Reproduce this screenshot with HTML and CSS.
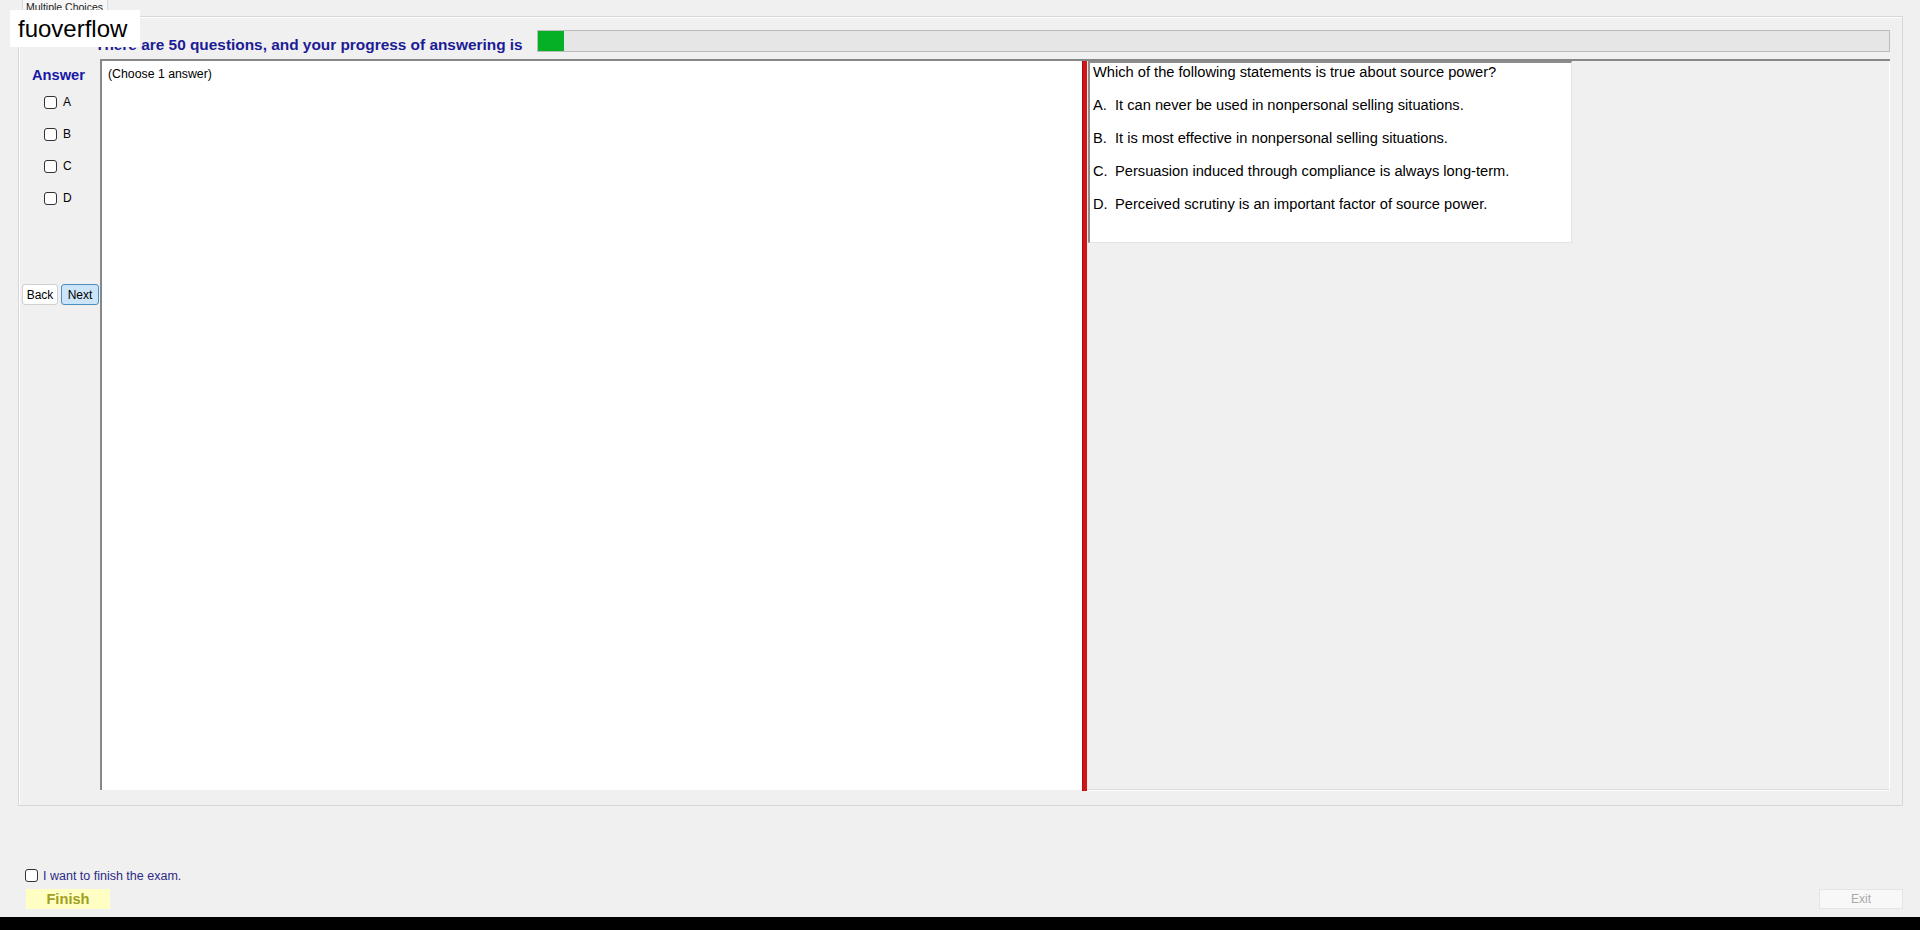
FILE: index.html
```html
<!DOCTYPE html>
<html lang="en">
<head>
  <meta charset="UTF-8" />
  <meta name="viewport" content="width=device-width, initial-scale=1.0"/>
  <title>Multiple Choices</title>
  <link rel="stylesheet" href="styles.css">
</head>
<body>
  <div class="window">
    <div class="watermark">fuoverflow</div>

    <div class="tabs">
      <div class="tab">Multiple Choices</div>
    </div>

    <div class="panel">
      <div class="progress-row">
        <h1 class="progress-title">There are 50 questions, and your progress of answering is</h1>
        <div class="progress"><div class="progress-fill" style="width: 1.9%"></div></div>
      </div>

      <div class="work">
        <div class="sidebar">
          <div class="answer-title">Answer</div>
          <div class="options">
            <label class="option"><input type="checkbox"> A</label>
            <label class="option"><input type="checkbox"> B</label>
            <label class="option"><input type="checkbox"> C</label>
            <label class="option"><input type="checkbox"> D</label>
          </div>
          <div class="nav">
            <button class="btn">Back</button>
            <button class="btn btn-next">Next</button>
          </div>
        </div>

        <div class="main">
          <div class="answer-pane">(Choose 1 answer)</div>
          <div class="splitter"></div>
          <div class="question-pane">
            <div class="question-box">
              <p>Which of the following statements is true about source power?</p>
              <p><span class="letter">A.</span>It can never be used in nonpersonal selling situations.</p>
              <p><span class="letter">B.</span>It is most effective in nonpersonal selling situations.</p>
              <p><span class="letter">C.</span>Persuasion induced through compliance is always long-term.</p>
              <p><span class="letter">D.</span>Perceived scrutiny is an important factor of source power.</p>
            </div>
          </div>
        </div>
      </div>
    </div>

    <div class="footer">
      <div class="finish-group">
        <label class="finish-check"><input type="checkbox"> I want to finish the exam.</label>
        <button class="btn-finish">Finish</button>
      </div>
      <button class="btn-exit">Exit</button>
    </div>
  </div>
  <div class="taskbar"></div>
</body>
</html>
```

FILE: styles.css
```css
body {
  margin: 0;
  height: 930px;
  overflow: hidden;
  background-color: #f0f0f0;
  font-family: "Liberation Sans", Arial, sans-serif;
  color: #000;
}
.window {
  position: relative;
  height: 917px;
}
.watermark {
  position: absolute;
  top: 10px;
  left: 10px;
  width: 130px;
  height: 37px;
  box-sizing: border-box;
  padding-left: 8px;
  background: #fff;
  font-size: 24px;
  line-height: 37px;
  z-index: 2;
}
.tabs {
  height: 16px;
}
.tab {
  margin-left: 22px;
  width: 86px;
  height: 16px;
  box-sizing: border-box;
  padding: 1px 0 0 3px;
  border: 1px solid #d9d9d9;
  border-top: none;
  border-bottom: none;
  background: #f7f7f7;
  font-size: 10.5px;
  line-height: 12px;
  color: #222;
}
.panel {
  margin-left: 18px;
  width: 1885px;
  height: 790px;
  box-sizing: border-box;
  border: 1px solid #d7d7d7;
  box-shadow: inset 1px 1px 0 #fff;
}
.progress-row {
  display: flex;
  height: 42px;
  padding-left: 76px;
}
.progress-title {
  margin: 19px 0 0;
  width: 442px;
  font-size: 15.4px;
  line-height: 18px;
  font-weight: bold;
  color: #1c1c96;
  white-space: nowrap;
}
.progress {
  margin-top: 13px;
  width: 1353px;
  height: 22px;
  box-sizing: border-box;
  border: 1px solid #bcbcbc;
  background: #e6e6e6;
}
.progress-fill {
  height: 100%;
  background: #06b025;
}
.work {
  display: grid;
  grid-template-columns: 81px 1790px;
  height: 731px;
}
.sidebar {
  padding: 8px 0 0 3px;
}
.answer-title {
  padding-left: 10px;
  font-size: 14.67px;
  line-height: 17px;
  font-weight: bold;
  color: #1717a8;
}
.options {
  margin-top: 2px;
  padding-left: 22px;
}
.option {
  display: flex;
  align-items: center;
  gap: 6px;
  height: 32px;
  font-size: 12px;
}
.option input,
.finish-check input {
  appearance: none;
  width: 13px;
  height: 13px;
  margin: 0;
  box-sizing: border-box;
  border: 1px solid #333;
  border-radius: 3px;
  background: #fff;
}
.nav {
  display: flex;
  gap: 3px;
  margin-top: 70px;
}
.btn {
  width: 36px;
  height: 21px;
  padding: 0;
  border: 1px solid #d0d0d0;
  border-radius: 3px;
  background: #fff;
  font-family: inherit;
  font-size: 12px;
  color: #000;
}
.btn-next {
  width: 38px;
  border-color: #4f8fbf;
  background: #cce4f7;
}
.main {
  display: flex;
  border-top: 2px solid #878787;
  border-left: 2px solid #878787;
}
.answer-pane {
  width: 980px;
  padding: 6px 0 0 6px;
  box-sizing: border-box;
  background: #fff;
  font-size: 12.3px;
  line-height: 14px;
}
.splitter {
  width: 5px;
  margin-bottom: -1px;
  box-sizing: border-box;
  border-left: 1px solid #9c1010;
  background: #d41515;
}
.question-pane {
  flex: 1;
  border-right: 1px solid #fff;
  border-bottom: 1px solid #dcdcdc;
  box-shadow: 0 1px 0 #fff;
}
.question-box {
  margin-left: 1px;
  width: 484px;
  height: 182px;
  box-sizing: border-box;
  padding: 1px 0 0 3px;
  border-top: 2px solid #8c8c8c;
  border-left: 2px solid #8c8c8c;
  border-right: 1px solid #e3e3e3;
  border-bottom: 1px solid #e3e3e3;
  background: #fff;
  font-size: 14.67px;
  line-height: 17px;
}
.question-box p {
  margin: 0 0 16px;
}
.letter {
  display: inline-block;
  width: 22px;
}
.footer {
  display: flex;
  justify-content: space-between;
  align-items: flex-end;
  height: 111px;
  box-sizing: border-box;
  padding: 0 17px 8px 25px;
}
.finish-group {
  display: flex;
  flex-direction: column;
  align-items: flex-start;
  gap: 7px;
}
.finish-check {
  display: flex;
  align-items: center;
  gap: 5px;
  height: 13px;
  font-size: 12.5px;
  color: #2e2a85;
}
.btn-finish {
  margin-left: 1px;
  width: 84px;
  height: 20px;
  padding: 0;
  border: none;
  background: #ffffc4;
  font-family: inherit;
  font-size: 14.67px;
  font-weight: bold;
  color: #a0a01e;
}
.btn-exit {
  width: 84px;
  height: 20px;
  padding: 0;
  border: 1px solid #e5e5e5;
  background: #f8f8f8;
  font-family: inherit;
  font-size: 12px;
  color: #a8a8a8;
}
.taskbar {
  height: 13px;
  background: #000;
}
```
